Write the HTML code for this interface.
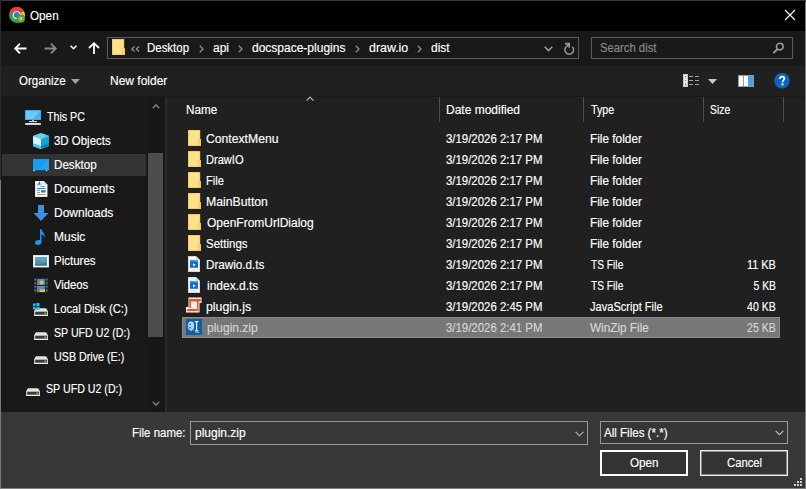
<!DOCTYPE html>
<html><head><meta charset="utf-8">
<style>
*{margin:0;padding:0;box-sizing:border-box}
html,body{width:806px;height:489px;overflow:hidden;background:#000}
body{position:relative;font-family:"Liberation Sans",sans-serif;font-size:12px;color:#fff}
.a{position:absolute}
.t{position:absolute;white-space:nowrap;line-height:16px;height:16px;-webkit-text-stroke:0.15px currentColor}
svg{position:absolute;overflow:visible}
</style></head><body>
<!-- window frame -->
<div class="a" style="left:0;top:0;width:806px;height:489px;background:#383838"></div>
<div class="a" style="left:0;top:0;width:1px;height:180px;background:#2c2c2c"></div>
<div class="a" style="left:0;top:180px;width:1px;height:309px;background:#7a7a7a"></div>
<div class="a" style="left:805px;top:2px;width:1px;height:487px;background:#808080"></div>
<div class="a" style="left:0;top:488px;width:806px;height:1px;background:#808080"></div>
<!-- title bar -->
<div class="a" style="left:1px;top:1px;width:804px;height:30px;background:#000"></div>
<!-- nav bar -->
<div class="a" style="left:1px;top:31px;width:804px;height:35px;background:#191919"></div>
<!-- command bar -->
<div class="a" style="left:1px;top:66px;width:804px;height:30px;background:#202020"></div>
<div class="a" style="left:1px;top:96px;width:804px;height:1px;background:#191919"></div>
<!-- nav pane -->
<div class="a" style="left:1px;top:97px;width:146px;height:315px;background:#191919"></div>
<div class="a" style="left:147px;top:97px;width:18px;height:315px;background:#171717"></div>
<div class="a" style="left:165px;top:97px;width:2px;height:315px;background:#2a2a2a"></div>
<!-- file list -->
<div class="a" style="left:167px;top:97px;width:638px;height:315px;background:#202020"></div>
<!-- bottom panel -->
<div class="a" style="left:1px;top:412px;width:804px;height:76px;background:#383838"></div>

<!-- TITLE -->
<svg style="left:9px;top:7px" width="16" height="16" viewBox="0 0 16 16">
  <circle cx="8" cy="8" r="7.9" fill="#2fa84f"/>
  <path d="M8 8L0.39 5.53A8 8 0 0 1 15.06 4.24Z" fill="#e8412f"/>
  <path d="M8 8L15.06 4.24A8 8 0 0 1 10.07 15.73Z" fill="#f9c013"/>
  <circle cx="7.7" cy="8.1" r="3.9" fill="#fff"/>
  <circle cx="7.7" cy="8.1" r="3" fill="#2f7be8"/>
  <circle cx="11.9" cy="11.7" r="4.1" fill="#4f8f2f"/>
  <circle cx="11.9" cy="11.7" r="3.4" fill="#6aa53c"/>
  <path d="M10.8 10.6H13V12.6H12.1V11.6H10.8Z" fill="#e8f2e0"/>
  <rect x="10.8" y="12" width="1" height="1.2" fill="#e8f2e0"/>
</svg>
<div class="t" style="left:30px;top:8px;transform:scaleX(0.9759);transform-origin:0 0">Open</div>
<svg style="left:785px;top:10px" width="10" height="10" viewBox="0 0 10 10"><path d="M0 0L10 10M10 0L0 10" stroke="#fff" stroke-width="1.1"/></svg>

<!-- NAV -->
<svg style="left:14px;top:43px" width="13" height="11" viewBox="0 0 13 11"><path d="M1.2 5.5H12.5M6 0.7L1.2 5.5L6 10.3" stroke="#fff" stroke-width="1.8" fill="none"/></svg>
<svg style="left:44px;top:43px" width="13" height="11" viewBox="0 0 13 11"><path d="M0.5 5.5H11.8M7 0.7L11.8 5.5L7 10.3" stroke="#8a8a8a" stroke-width="1.8" fill="none"/></svg>
<svg style="left:70px;top:45px" width="7" height="5" viewBox="0 0 7 5"><path d="M0.6 0.8L3.5 3.7L6.4 0.8" stroke="#fff" stroke-width="1.6" fill="none"/></svg>
<svg style="left:88px;top:42px" width="12" height="12" viewBox="0 0 12 12"><path d="M6 1.2V12M1 6L6 1.2L11 6" stroke="#fff" stroke-width="1.8" fill="none"/></svg>

<div class="a" style="left:107px;top:37px;width:472px;height:22px;border:1px solid #5c5c5c"></div>
<div class="a" style="left:558px;top:38px;width:1px;height:20px;background:#141414"></div>
<svg style="left:112px;top:39px" width="13" height="16" viewBox="0 0 13 16">
  <rect x="0" y="0" width="12.2" height="16" fill="#efc650"/>
  <rect x="0.7" y="0.7" width="10.8" height="14.6" fill="#fde28e"/>
  <rect x="10.2" y="9" width="2.8" height="7" fill="#efc650"/>
  <rect x="10.9" y="9.7" width="1.4" height="5.6" fill="#f9d774"/>
</svg>
<svg style="left:131px;top:46px" width="9" height="6" viewBox="0 0 9 6"><path d="M3.5 0.5L0.8 3L3.5 5.5M8 0.5L5.3 3L8 5.5" stroke="#9a9a9a" stroke-width="1.1" fill="none"/></svg>
<div class="t" style="left:147px;top:40px;transform:scaleX(0.9545);transform-origin:0 0">Desktop</div>
<svg style="left:199px;top:45px" width="5" height="8" viewBox="0 0 5 8"><path d="M0.8 0.8L4 4L0.8 7.2" stroke="#8c8c8c" stroke-width="1.3" fill="none"/></svg>
<div class="t" style="left:213px;top:40px">api</div>
<svg style="left:238px;top:45px" width="5" height="8" viewBox="0 0 5 8"><path d="M0.8 0.8L4 4L0.8 7.2" stroke="#8c8c8c" stroke-width="1.3" fill="none"/></svg>
<div class="t" style="left:252px;top:40px">docspace-plugins</div>
<svg style="left:355px;top:45px" width="5" height="8" viewBox="0 0 5 8"><path d="M0.8 0.8L4 4L0.8 7.2" stroke="#8c8c8c" stroke-width="1.3" fill="none"/></svg>
<div class="t" style="left:369px;top:40px;transform:scaleX(1.0316);transform-origin:0 0">draw.io</div>
<svg style="left:417px;top:45px" width="5" height="8" viewBox="0 0 5 8"><path d="M0.8 0.8L4 4L0.8 7.2" stroke="#8c8c8c" stroke-width="1.3" fill="none"/></svg>
<div class="t" style="left:431px;top:40px">dist</div>
<svg style="left:544px;top:46px" width="9" height="6" viewBox="0 0 9 6"><path d="M0.7 0.8L4.5 4.6L8.3 0.8" stroke="#9a9a9a" stroke-width="1.6" fill="none"/></svg>
<svg style="left:560px;top:40px" width="18" height="18" viewBox="0 0 18 18"><path d="M6 7A4.3 4.3 0 1 0 12.3 6.8" stroke="#9a9a9a" stroke-width="1.6" fill="none"/><path d="M5 3.6H9.2V7.8M6 7L9 4" stroke="#9a9a9a" stroke-width="1.6" fill="none"/></svg>

<div class="a" style="left:591px;top:37px;width:202px;height:22px;border:1px solid #5c5c5c"></div>
<div class="t" style="left:600px;top:40px;color:#8a8a8a;transform:scaleX(0.94);transform-origin:0 0">Search dist</div>
<svg style="left:772px;top:42px" width="12" height="13" viewBox="0 0 12 13"><circle cx="7.8" cy="4.6" r="3.3" stroke="#9a9a9a" stroke-width="1.6" fill="none"/><path d="M5.5 7L1.4 11.2" stroke="#9a9a9a" stroke-width="1.9"/></svg>

<!-- COMMAND BAR -->
<div class="t" style="left:19px;top:73px;transform:scaleX(0.9592);transform-origin:0 0">Organize</div>
<svg style="left:71px;top:79px" width="9" height="5" viewBox="0 0 9 5"><path d="M0 0H9L4.5 5Z" fill="#a0a0a0"/></svg>
<div class="t" style="left:110px;top:73px">New folder</div>
<svg style="left:683px;top:74px" width="17" height="13" viewBox="0 0 17 13">
  <rect x="0" y="0" width="5" height="13" fill="#c4c4c4"/>
  <rect x="0.9" y="0.9" width="3.2" height="3.4" fill="#fff"/>
  <rect x="0.9" y="4.8" width="3.2" height="3.4" fill="#fff"/>
  <rect x="0.9" y="8.7" width="3.2" height="3.4" fill="#fff"/>
  <circle cx="2.5" cy="2.6" r="0.8" fill="#355f5f"/>
  <circle cx="2.5" cy="6.5" r="0.8" fill="#3d8de0"/>
  <circle cx="2.5" cy="10.4" r="0.8" fill="#c62828"/>
  <rect x="6" y="2" width="4" height="1" fill="#a0a0a0"/><rect x="12" y="2" width="4" height="1" fill="#a0a0a0"/>
  <rect x="6" y="6" width="4" height="1" fill="#a0a0a0"/><rect x="12" y="6" width="4" height="1" fill="#a0a0a0"/>
  <rect x="6" y="10" width="4" height="1" fill="#a0a0a0"/><rect x="12" y="10" width="4" height="1" fill="#a0a0a0"/>
</svg>
<svg style="left:708px;top:79px" width="9" height="5" viewBox="0 0 9 5"><path d="M0 0H9L4.5 5Z" fill="#c8c8c8"/></svg>
<svg style="left:738px;top:75px" width="16" height="12" viewBox="0 0 16 12">
  <rect x="0" y="0" width="16" height="12" fill="#9a9a9a"/>
  <rect x="1" y="1" width="4" height="10" fill="#fff"/>
  <rect x="6" y="1" width="4" height="10" fill="#fff"/>
  <rect x="10" y="1" width="5" height="10" fill="#4a9fe8"/>
</svg>
<svg style="left:774px;top:73px" width="16" height="16" viewBox="0 0 16 16">
  <circle cx="8" cy="7.8" r="7.7" fill="#0f63c4"/>
  <path d="M5.9 5.9C5.9 4.5 6.9 3.6 8.1 3.6C9.4 3.6 10.3 4.4 10.3 5.6C10.3 7.2 8.5 7.4 8.5 9.2" stroke="#fff" stroke-width="1.7" fill="none"/>
  <rect x="7.5" y="10.4" width="2" height="2" fill="#fff"/>
</svg>

<!-- NAV PANE -->
<div class="a" style="left:2px;top:154px;width:144px;height:22px;background:#333"></div>
<svg style="left:25px;top:110px" width="16" height="16" viewBox="0 0 16 16">
  <rect x="0" y="0" width="16" height="10" fill="#2ea8f0"/>
  <rect x="0.8" y="0.8" width="14.4" height="8.4" fill="#6cc9f7"/>
  <path d="M8 9.2L15.2 0.8V9.2Z" fill="#46b5f5"/>
  <rect x="4" y="11" width="8" height="1.2" fill="#d0d0d0"/>
  <rect x="7" y="10" width="2" height="1.5" fill="#bbb"/>
  <rect x="0" y="13" width="16" height="2" rx="0.8" fill="#d8d8e6"/>
</svg>
<div class="t" style="left:47px;top:109px;transform:scaleX(0.886);transform-origin:0 0">This PC</div>
<svg style="left:33px;top:133px" width="16" height="16" viewBox="0 0 16 16">
  <path d="M8 0L16 3V13L8 16L0 13V3Z" fill="#28b8dc"/>
  <path d="M0 3L8 6V16L0 13Z" fill="#d6f2fa"/>
  <path d="M8 6L16 3V13L8 16Z" fill="#14a0d8"/>
  <path d="M0 3L8 0L16 3L8 6Z" fill="#62d2ea"/>
  <path d="M0 10L8 13V16L0 13Z" fill="#52c8e6"/>
  <path d="M8 13L16 10V13L8 16Z" fill="#0c84b8"/>
</svg>
<div class="t" style="left:54px;top:133px;transform:scaleX(0.9542);transform-origin:0 0">3D Objects</div>
<svg style="left:33px;top:159px" width="16" height="13" viewBox="0 0 16 13">
  <rect x="0" y="0" width="16" height="12" fill="#1a9af0"/>
  <path d="M16 0V12H3Z" fill="#34a6f4" opacity="0.6"/>
  <rect x="0" y="11" width="16" height="1.2" fill="#0a4f8a"/>
  <rect x="0.5" y="11" width="1.5" height="1.2" fill="#fff"/>
  <rect x="13" y="11" width="1.2" height="1.2" fill="#d8ecff"/>
</svg>
<div class="t" style="left:54px;top:157px;transform:scaleX(0.9682);transform-origin:0 0">Desktop</div>
<svg style="left:35px;top:181px" width="13" height="16" viewBox="0 0 13 16">
  <path d="M0 0H9L12.5 3.5V16H0Z" fill="#d9d9d9"/>
  <path d="M0.7 0.7H8.7L11.8 3.8V15.3H0.7Z" fill="#fff"/>
  <path d="M8.7 0.7V3.8H11.8" fill="#ccc"/>
  <path d="M2.5 4.5L4.5 1.5L5 4.5" stroke="#1e88e5" stroke-width="1.1" fill="none"/>
  <rect x="6" y="2.5" width="1" height="1" fill="#1e88e5"/>
  <rect x="5.5" y="5" width="4.5" height="1" fill="#42a5f5"/>
  <rect x="2" y="7" width="8.5" height="1.1" fill="#1e88e5"/>
  <rect x="2" y="9" width="3" height="1" fill="#9a9a9a"/>
  <rect x="6" y="9" width="4.5" height="2.5" fill="#4a7a4a"/>
  <rect x="6" y="9" width="4.5" height="1" fill="#5b9ee8"/>
  <rect x="2" y="11" width="3" height="1" fill="#9a9a9a"/>
  <rect x="2" y="13" width="8.5" height="1" fill="#9a9a9a"/>
</svg>
<div class="t" style="left:54px;top:181px">Documents</div>
<svg style="left:33px;top:205px" width="16" height="16" viewBox="0 0 16 16">
  <path d="M5 0H11V8H15.5L8 16L0.5 8H5Z" fill="#3d8fe0"/>
</svg>
<div class="t" style="left:54px;top:205px">Downloads</div>
<svg style="left:35px;top:229px" width="12" height="16" viewBox="0 0 12 16">
  <path d="M5 0.2H6.5C7 3 11 5 9.5 10C9.8 7 8 5.5 6.5 5.2V13C6.5 14.8 4.8 16 2.8 16C1.2 16 0 15.2 0 14C0 12.3 1.8 11 3.6 11C4.2 11 4.6 11.1 5 11.3Z" fill="#1e96f0"/>
</svg>
<div class="t" style="left:54px;top:229px">Music</div>
<svg style="left:33px;top:255px" width="16" height="13" viewBox="0 0 16 13">
  <rect x="0" y="0" width="16" height="12.5" fill="#cfcfcf"/>
  <rect x="0.6" y="0.6" width="14.8" height="11.3" fill="#fff"/>
  <rect x="2" y="2" width="12" height="8.5" fill="#5aa0e0"/>
  <path d="M2 7L6 4.5L9 6.5L14 5.5V10.5H2Z" fill="#5a9a7a"/>
  <path d="M2 9L14 8V10.5H2Z" fill="#3a7ab0"/>
</svg>
<div class="t" style="left:54px;top:253px;transform:scaleX(0.9605);transform-origin:0 0">Pictures</div>
<svg style="left:34px;top:278px" width="14" height="15" viewBox="0 0 14 15">
  <rect x="0" y="0" width="14" height="15" fill="#2a2a2a"/>
  <rect x="0.5" y="1" width="1.5" height="1.5" fill="#777"/><rect x="0.5" y="4.5" width="1.5" height="1.5" fill="#777"/><rect x="0.5" y="8" width="1.5" height="1.5" fill="#777"/><rect x="0.5" y="11.5" width="1.5" height="1.5" fill="#777"/>
  <rect x="12" y="1" width="1.5" height="1.5" fill="#777"/><rect x="12" y="4.5" width="1.5" height="1.5" fill="#777"/><rect x="12" y="8" width="1.5" height="1.5" fill="#777"/><rect x="12" y="11.5" width="1.5" height="1.5" fill="#777"/>
  <rect x="3" y="1" width="8" height="6" fill="#3a8ee0"/>
  <circle cx="7.5" cy="4.5" r="2" fill="#f0c020"/>
  <rect x="3" y="5.5" width="3" height="1.5" fill="#e05a5a"/>
  <rect x="3" y="8" width="8" height="6" fill="#3a8ee0"/>
  <rect x="6" y="11.5" width="5" height="2.5" fill="#f0c020"/>
  <rect x="3" y="12" width="2" height="2" fill="#e05a5a"/>
</svg>
<div class="t" style="left:54px;top:277px;transform:scaleX(0.9378);transform-origin:0 0">Videos</div>
<svg style="left:34px;top:308px" width="14" height="8" viewBox="0 0 14 8">
  <path d="M2 0.3H12L13.8 3V8H0.2V3Z" fill="#e6e6e6"/>
  <path d="M0.2 3H13.8V8H0.2Z" fill="#cfcfcf"/>
  <rect x="1.2" y="3.8" width="11.6" height="2.8" fill="#3a3a3a"/>
  <rect x="10.2" y="4.5" width="1.6" height="1.5" fill="#3cd23c"/>
  <rect x="0.2" y="7.2" width="13.6" height="0.8" fill="#f2f2f2"/>
</svg>
<svg style="left:33px;top:303px" width="7" height="7" viewBox="0 0 7 7">
  <rect x="0" y="0.5" width="2.6" height="2.6" fill="#1ec0f6"/><rect x="3.4" y="0" width="3.1" height="3.1" fill="#1ec0f6"/>
  <rect x="0" y="3.9" width="2.6" height="2.6" fill="#1ec0f6"/><rect x="3.4" y="3.9" width="3.1" height="3.1" fill="#1ec0f6"/>
</svg>
<div class="t" style="left:54px;top:301px;transform:scaleX(0.9367);transform-origin:0 0">Local Disk (C:)</div>
<svg style="left:34px;top:332px" width="14" height="8" viewBox="0 0 14 8">
  <path d="M2 0.3H12L13.8 3V8H0.2V3Z" fill="#e6e6e6"/>
  <path d="M0.2 3H13.8V8H0.2Z" fill="#cfcfcf"/>
  <rect x="1.2" y="3.8" width="11.6" height="2.8" fill="#3a3a3a"/>
  <rect x="10.2" y="4.5" width="1.6" height="1.5" fill="#3cd23c"/>
  <rect x="0.2" y="7.2" width="13.6" height="0.8" fill="#f2f2f2"/>
</svg>
<div class="t" style="left:54px;top:325px;transform:scaleX(0.886);transform-origin:0 0">SP UFD U2 (D:)</div>
<svg style="left:34px;top:356px" width="14" height="8" viewBox="0 0 14 8">
  <path d="M2 0.3H12L13.8 3V8H0.2V3Z" fill="#e6e6e6"/>
  <path d="M0.2 3H13.8V8H0.2Z" fill="#cfcfcf"/>
  <rect x="1.2" y="3.8" width="11.6" height="2.8" fill="#3a3a3a"/>
  <rect x="10.2" y="4.5" width="1.6" height="1.5" fill="#3cd23c"/>
  <rect x="0.2" y="7.2" width="13.6" height="0.8" fill="#f2f2f2"/>
</svg>
<div class="t" style="left:54px;top:349px;transform:scaleX(0.8924);transform-origin:0 0">USB Drive (E:)</div>
<svg style="left:26px;top:388px" width="14" height="8" viewBox="0 0 14 8">
  <path d="M2 0.3H12L13.8 3V8H0.2V3Z" fill="#e6e6e6"/>
  <path d="M0.2 3H13.8V8H0.2Z" fill="#cfcfcf"/>
  <rect x="1.2" y="3.8" width="11.6" height="2.8" fill="#3a3a3a"/>
  <rect x="10.2" y="4.5" width="1.6" height="1.5" fill="#3cd23c"/>
  <rect x="0.2" y="7.2" width="13.6" height="0.8" fill="#f2f2f2"/>
</svg>
<div class="t" style="left:46px;top:381px;transform:scaleX(0.8872);transform-origin:0 0">SP UFD U2 (D:)</div>
<!-- nav scrollbar -->
<svg style="left:152px;top:103px" width="8" height="6" viewBox="0 0 8 6"><path d="M0.8 5.2L4 1.8L7.2 5.2" stroke="#7a7a7a" stroke-width="1.6" fill="none"/></svg>
<div class="a" style="left:148px;top:153px;width:15px;height:184px;background:#4d4d4d"></div>
<svg style="left:152px;top:401px" width="8" height="6" viewBox="0 0 8 6"><path d="M0.8 0.8L4 4.2L7.2 0.8" stroke="#7a7a7a" stroke-width="1.6" fill="none"/></svg>

<!-- FILE LIST HEADER -->
<svg style="left:306px;top:96px" width="8" height="5" viewBox="0 0 8 5"><path d="M0.6 4.6L4 1.2L7.4 4.6" stroke="#b8b8b8" stroke-width="1.2" fill="none"/></svg>
<div class="t" style="left:186px;top:102px;transform:scaleX(0.975);transform-origin:0 0">Name</div>
<div class="a" style="left:439px;top:97px;width:1px;height:25px;background:#4e4e4e"></div>
<div class="t" style="left:446px;top:102px">Date modified</div>
<div class="a" style="left:583px;top:97px;width:1px;height:25px;background:#4e4e4e"></div>
<div class="t" style="left:591px;top:102px;transform:scaleX(0.8885);transform-origin:0 0">Type</div>
<div class="a" style="left:703px;top:97px;width:1px;height:25px;background:#4e4e4e"></div>
<div class="t" style="left:710px;top:102px;transform:scaleX(0.8652);transform-origin:0 0">Size</div>
<div class="a" style="left:783px;top:97px;width:1px;height:25px;background:#4e4e4e"></div>
<!-- selected row -->
<div class="a" style="left:182px;top:317px;width:598px;height:21px;background:#777;border:1px solid #8a8a8a"></div>
<svg style="left:188px;top:130px" width="13" height="16" viewBox="0 0 13 16">
  <rect x="0" y="0" width="12.2" height="16" fill="#efc650"/>
  <rect x="0.7" y="0.7" width="10.8" height="14.6" fill="#fde28e"/>
  <rect x="10.2" y="9" width="2.8" height="7" fill="#efc650"/>
  <rect x="10.9" y="9.7" width="1.4" height="5.6" fill="#f9d774"/>
</svg><div class="t" style="left:206px;top:131px;transform:scaleX(1.0155);transform-origin:0 0">ContextMenu</div>
<div class="t" style="left:446px;top:131px;transform:scaleX(0.9505);transform-origin:0 0">3/19/2026 2:17 PM</div>
<div class="t" style="left:590px;top:131px;transform:scaleX(0.9849);transform-origin:0 0">File folder</div>
<svg style="left:188px;top:151px" width="13" height="16" viewBox="0 0 13 16">
  <rect x="0" y="0" width="12.2" height="16" fill="#efc650"/>
  <rect x="0.7" y="0.7" width="10.8" height="14.6" fill="#fde28e"/>
  <rect x="10.2" y="9" width="2.8" height="7" fill="#efc650"/>
  <rect x="10.9" y="9.7" width="1.4" height="5.6" fill="#f9d774"/>
</svg><div class="t" style="left:206px;top:152px;transform:scaleX(0.922);transform-origin:0 0">DrawIO</div>
<div class="t" style="left:446px;top:152px;transform:scaleX(0.9505);transform-origin:0 0">3/19/2026 2:17 PM</div>
<div class="t" style="left:590px;top:152px;transform:scaleX(0.9849);transform-origin:0 0">File folder</div>
<svg style="left:188px;top:172px" width="13" height="16" viewBox="0 0 13 16">
  <rect x="0" y="0" width="12.2" height="16" fill="#efc650"/>
  <rect x="0.7" y="0.7" width="10.8" height="14.6" fill="#fde28e"/>
  <rect x="10.2" y="9" width="2.8" height="7" fill="#efc650"/>
  <rect x="10.9" y="9.7" width="1.4" height="5.6" fill="#f9d774"/>
</svg><div class="t" style="left:206px;top:173px;transform:scaleX(0.9211);transform-origin:0 0">File</div>
<div class="t" style="left:446px;top:173px;transform:scaleX(0.9505);transform-origin:0 0">3/19/2026 2:17 PM</div>
<div class="t" style="left:590px;top:173px;transform:scaleX(0.9849);transform-origin:0 0">File folder</div>
<svg style="left:188px;top:193px" width="13" height="16" viewBox="0 0 13 16">
  <rect x="0" y="0" width="12.2" height="16" fill="#efc650"/>
  <rect x="0.7" y="0.7" width="10.8" height="14.6" fill="#fde28e"/>
  <rect x="10.2" y="9" width="2.8" height="7" fill="#efc650"/>
  <rect x="10.9" y="9.7" width="1.4" height="5.6" fill="#f9d774"/>
</svg><div class="t" style="left:206px;top:194px;transform:scaleX(1.0197);transform-origin:0 0">MainButton</div>
<div class="t" style="left:446px;top:194px;transform:scaleX(0.9505);transform-origin:0 0">3/19/2026 2:17 PM</div>
<div class="t" style="left:590px;top:194px;transform:scaleX(0.9849);transform-origin:0 0">File folder</div>
<svg style="left:188px;top:214px" width="13" height="16" viewBox="0 0 13 16">
  <rect x="0" y="0" width="12.2" height="16" fill="#efc650"/>
  <rect x="0.7" y="0.7" width="10.8" height="14.6" fill="#fde28e"/>
  <rect x="10.2" y="9" width="2.8" height="7" fill="#efc650"/>
  <rect x="10.9" y="9.7" width="1.4" height="5.6" fill="#f9d774"/>
</svg><div class="t" style="left:207px;top:215px">OpenFromUrlDialog</div>
<div class="t" style="left:446px;top:215px;transform:scaleX(0.9505);transform-origin:0 0">3/19/2026 2:17 PM</div>
<div class="t" style="left:590px;top:215px;transform:scaleX(0.9849);transform-origin:0 0">File folder</div>
<svg style="left:188px;top:235px" width="13" height="16" viewBox="0 0 13 16">
  <rect x="0" y="0" width="12.2" height="16" fill="#efc650"/>
  <rect x="0.7" y="0.7" width="10.8" height="14.6" fill="#fde28e"/>
  <rect x="10.2" y="9" width="2.8" height="7" fill="#efc650"/>
  <rect x="10.9" y="9.7" width="1.4" height="5.6" fill="#f9d774"/>
</svg><div class="t" style="left:206px;top:236px;transform:scaleX(0.9581);transform-origin:0 0">Settings</div>
<div class="t" style="left:446px;top:236px;transform:scaleX(0.9505);transform-origin:0 0">3/19/2026 2:17 PM</div>
<div class="t" style="left:590px;top:236px;transform:scaleX(0.9849);transform-origin:0 0">File folder</div>
<svg style="left:188px;top:256px" width="12" height="16" viewBox="0 0 12 16">
  <path d="M0 0H8.2L12 3.8V16H0Z" fill="#c8c8c8"/>
  <path d="M0.7 0.7H8L11.3 4V15.3H0.7Z" fill="#fafafa"/>
  <path d="M8 0.7V4H11.3Z" fill="#d0d0d0"/>
  <rect x="2" y="4" width="8" height="7.8" fill="#0f6fd0"/>
  <path d="M2 4H10V5.6H2Z" fill="#2f8fe6"/>
  <path d="M6.5 4H10V5.2H6.5Z" fill="#3ccaf2"/>
  <path d="M5 7.2L7.7 8.8L5 10.4Z" fill="#fff"/>
  <rect x="2" y="13" width="8" height="0.6" fill="#e0d8d0"/>
</svg><div class="t" style="left:206px;top:257px;transform:scaleX(0.9733);transform-origin:0 0">Drawio.d.ts</div>
<div class="t" style="left:446px;top:257px;transform:scaleX(0.9505);transform-origin:0 0">3/19/2026 2:17 PM</div>
<div class="t" style="left:591px;top:257px;transform:scaleX(0.85);transform-origin:0 0">TS File</div>
<div class="t" style="right:30px;top:257px;text-align:right;transform:scaleX(0.9065);transform-origin:100% 0">11 KB</div>
<svg style="left:188px;top:277px" width="12" height="16" viewBox="0 0 12 16">
  <path d="M0 0H8.2L12 3.8V16H0Z" fill="#c8c8c8"/>
  <path d="M0.7 0.7H8L11.3 4V15.3H0.7Z" fill="#fafafa"/>
  <path d="M8 0.7V4H11.3Z" fill="#d0d0d0"/>
  <rect x="2" y="4" width="8" height="7.8" fill="#0f6fd0"/>
  <path d="M2 4H10V5.6H2Z" fill="#2f8fe6"/>
  <path d="M6.5 4H10V5.2H6.5Z" fill="#3ccaf2"/>
  <path d="M5 7.2L7.7 8.8L5 10.4Z" fill="#fff"/>
  <rect x="2" y="13" width="8" height="0.6" fill="#e0d8d0"/>
</svg><div class="t" style="left:207px;top:278px">index.d.ts</div>
<div class="t" style="left:446px;top:278px;transform:scaleX(0.9505);transform-origin:0 0">3/19/2026 2:17 PM</div>
<div class="t" style="left:591px;top:278px;transform:scaleX(0.85);transform-origin:0 0">TS File</div>
<div class="t" style="right:30px;top:278px;text-align:right;transform:scaleX(0.8615);transform-origin:100% 0">5 KB</div>
<svg style="left:186px;top:297px" width="16" height="17" viewBox="0 0 16 17">
  <path d="M2.5 0.5H15.5V6H13.5V15.5H0V10H2.5Z" fill="#fff"/>
  <rect x="3.3" y="2" width="11.5" height="2.6" fill="#f4511e"/>
  <rect x="3.3" y="2" width="1.7" height="9" fill="#f4511e"/>
  <rect x="11" y="2" width="1.6" height="12" fill="#f4511e"/>
  <rect x="1" y="12" width="11.6" height="2.2" fill="#f4511e"/>
  <rect x="5" y="4.6" width="6" height="7.4" fill="#eeeeee"/>
  <rect x="10" y="11.2" width="1.5" height="1.2" fill="#c8e6a0"/>
</svg><div class="t" style="left:206px;top:299px;transform:scaleX(1.025);transform-origin:0 0">plugin.js</div>
<div class="t" style="left:446px;top:299px;transform:scaleX(0.9505);transform-origin:0 0">3/19/2026 2:45 PM</div>
<div class="t" style="left:590px;top:299px;transform:scaleX(0.9241);transform-origin:0 0">JavaScript File</div>
<div class="t" style="right:30px;top:299px;text-align:right;transform:scaleX(0.8758);transform-origin:100% 0">40 KB</div>
<svg style="left:186px;top:319px" width="16" height="16" viewBox="0 0 16 16">
  <rect x="0" y="0" width="16" height="16" fill="#0b5ea8"/>
  <path d="M5 2.6C7.2 2.6 8.6 4.4 8.6 7C8.6 9.6 7.2 11.6 5 11.6C2.8 11.6 1.8 9.6 1.8 7C1.8 4.4 2.8 2.6 5 2.6Z" fill="#b4d0ea"/>
  <path d="M2.6 4.2C3.6 3 6.4 3 7.6 4.2" stroke="#dde9f6" stroke-width="0.8" fill="none"/>
  <rect x="3.3" y="4.6" width="1.5" height="1.5" fill="#2f6ba6"/><rect x="3.3" y="8" width="1.5" height="1.5" fill="#2f6ba6"/>
  <path d="M7.4 3.4C8.4 4.5 8.6 9 7.4 10.8H9.2V3.4Z" fill="#1f5c9a"/>
  <path d="M8.8 2.6H12.4M10.6 2.6V11.8M8.8 11.8H12.4" stroke="#eaf2fb" stroke-width="1.2" fill="none"/>
  <path d="M4 10.8L6 11.6" stroke="#8ad0c0" stroke-width="0.8"/>
  <path d="M9.5 13.4H13.5" stroke="#8fb4dc" stroke-width="0.9"/>
</svg><div class="t" style="left:207px;top:320px;color:#d6d6d6">plugin.zip</div>
<div class="t" style="left:446px;top:320px;color:#d6d6d6;transform:scaleX(0.9505);transform-origin:0 0">3/19/2026 2:41 PM</div>
<div class="t" style="left:590px;top:320px;color:#d6d6d6;transform:scaleX(0.98);transform-origin:0 0">WinZip File</div>
<div class="t" style="right:30px;top:320px;color:#d6d6d6;text-align:right;transform:scaleX(0.8758);transform-origin:100% 0">25 KB</div>

<!-- BOTTOM -->
<div class="t" style="left:132px;top:425px;transform:scaleX(0.9545);transform-origin:0 0">File name:</div>
<div class="a" style="left:190px;top:421px;width:398px;height:24px;border:1px solid #999;background:#383838"></div>
<div class="t" style="left:195px;top:425px">plugin.zip</div>
<svg style="left:575px;top:431px" width="9" height="6" viewBox="0 0 9 6"><path d="M0.6 0.8L4.5 4.7L8.4 0.8" stroke="#b0b0b0" stroke-width="1.2" fill="none"/></svg>
<div class="a" style="left:600px;top:421px;width:188px;height:23px;border:1px solid #999;background:#363636"></div>
<div class="t" style="left:604px;top:425px;transform:scaleX(0.9621);transform-origin:0 0">All Files (*.*)</div>
<svg style="left:775px;top:430px" width="9" height="6" viewBox="0 0 9 6"><path d="M0.6 0.8L4.5 4.7L8.4 0.8" stroke="#bdbdbd" stroke-width="1.2" fill="none"/></svg>
<div class="a" style="left:600px;top:450px;width:88px;height:26px;border:2px solid #fff;background:#333"></div>
<div class="t" style="left:630px;top:455px;transform:scaleX(0.9724);transform-origin:0 0">Open</div>
<div class="a" style="left:700px;top:450px;width:88px;height:26px;border:1px solid #eee;background:#333"></div>
<div class="a" style="left:701px;top:451px;width:86px;height:24px;border:1px solid #8a8a8a"></div>
<div class="t" style="left:727px;top:455px;transform:scaleX(0.9405);transform-origin:0 0">Cancel</div>
<svg style="left:794px;top:478px" width="10" height="10" viewBox="0 0 10 10">
  <rect x="6" y="0" width="2" height="2" fill="#d0d0d0"/>
  <rect x="3" y="3" width="2" height="2" fill="#d0d0d0"/><rect x="6" y="3" width="2" height="2" fill="#d0d0d0"/>
  <rect x="0" y="6" width="2" height="2" fill="#d0d0d0"/><rect x="3" y="6" width="2" height="2" fill="#d0d0d0"/><rect x="6" y="6" width="2" height="2" fill="#d0d0d0"/>
</svg>
</body></html>
